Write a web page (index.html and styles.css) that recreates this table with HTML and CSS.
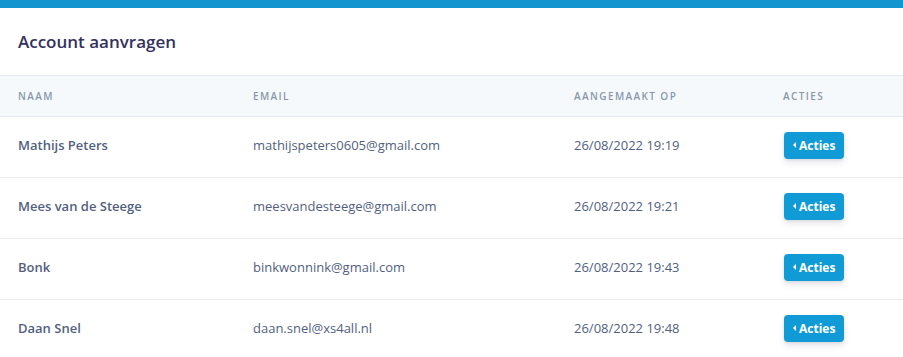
FILE: index.html
```html
<!DOCTYPE html>
<html lang="nl">
<head>
<meta charset="utf-8">
<title>Account aanvragen</title>
<link rel="stylesheet" href="styles.css">
</head>
<body>
<div class="topbar"></div>
<section class="card">
  <h1 class="card-title">Account aanvragen</h1>
  <table class="table">
    <colgroup>
      <col class="col-name">
      <col class="col-email">
      <col class="col-date">
      <col class="col-act">
    </colgroup>
    <thead>
      <tr>
        <th>Naam</th>
        <th>Email</th>
        <th>Aangemaakt op</th>
        <th>Acties</th>
      </tr>
    </thead>
    <tbody>
      <tr>
        <td class="name">Mathijs Peters</td>
        <td>mathijspeters0605@gmail.com</td>
        <td>26/08/2022 19:19</td>
        <td><button class="btn"><span class="caret"></span>Acties</button></td>
      </tr>
      <tr>
        <td class="name">Mees van de Steege</td>
        <td>meesvandesteege@gmail.com</td>
        <td>26/08/2022 19:21</td>
        <td><button class="btn"><span class="caret"></span>Acties</button></td>
      </tr>
      <tr>
        <td class="name">Bonk</td>
        <td>binkwonnink@gmail.com</td>
        <td>26/08/2022 19:43</td>
        <td><button class="btn"><span class="caret"></span>Acties</button></td>
      </tr>
      <tr>
        <td class="name">Daan Snel</td>
        <td>daan.snel@xs4all.nl</td>
        <td>26/08/2022 19:48</td>
        <td><button class="btn"><span class="caret"></span>Acties</button></td>
      </tr>
    </tbody>
  </table>
</section>
</body>
</html>
```
FILE: styles.css
```css
* { box-sizing: border-box; }
html, body { margin: 0; padding: 0; background: #fff; }
body {
  font-family: "Open Sans", "Noto Sans", sans-serif;
  color: #525f7f;
  width: 903px;
  overflow: hidden;
}
.topbar { height: 8px; background: #1396d0; }
.card { background: #fff; }
.card-title {
  margin: 0;
  padding: 22px 18px 0;
  height: 67px;
  font-size: 17px;
  font-weight: 600;
  color: #32325d;
  line-height: 24px;
}
.table { width: 903px; border-collapse: collapse; table-layout: fixed; }
.col-name { width: 235px; }
.col-email { width: 321px; }
.col-date { width: 209px; }
.col-act { width: 138px; }
.table th {
  background: #f6f9fc;
  border-top: 1px solid #e6ebf1;
  border-bottom: 1px solid #e6ebf1;
  height: 41px;
  padding: 0;
  text-align: left;
  font-size: 10px;
  font-weight: 600;
  letter-spacing: 1.4px;
  text-transform: uppercase;
  color: #8898aa;
}
.table td {
  height: 61px;
  padding: 0 0 4px 0;
  border-bottom: 1px solid #e9ecef;
  font-size: 13px;
  color: #525f7f;
  vertical-align: middle;
}
.table tbody tr:last-child td { border-bottom: 0; }
.table th:first-child, .table td:first-child { padding-left: 18px; }
.table col.col-name { width: 253px; }
.name { font-weight: 600; color: #525f7f; }
.btn {
  display: inline-flex;
  align-items: center;
  gap: 3px;
  height: 27px;
  margin-left: 1px;
  padding: 0 9px;
  border: 0;
  border-radius: 4px;
  background: #119bd6;
  color: #fff;
  font-family: "Open Sans", "Noto Sans", sans-serif;
  font-size: 12px;
  font-weight: 700;
  box-shadow: 0 4px 6px rgba(50,50,93,.11), 0 1px 3px rgba(0,0,0,.08);
}
.caret {
  width: 0; height: 0;
  border-top: 3px solid transparent;
  border-bottom: 3px solid transparent;
  border-right: 3px solid #fff;
}
```
